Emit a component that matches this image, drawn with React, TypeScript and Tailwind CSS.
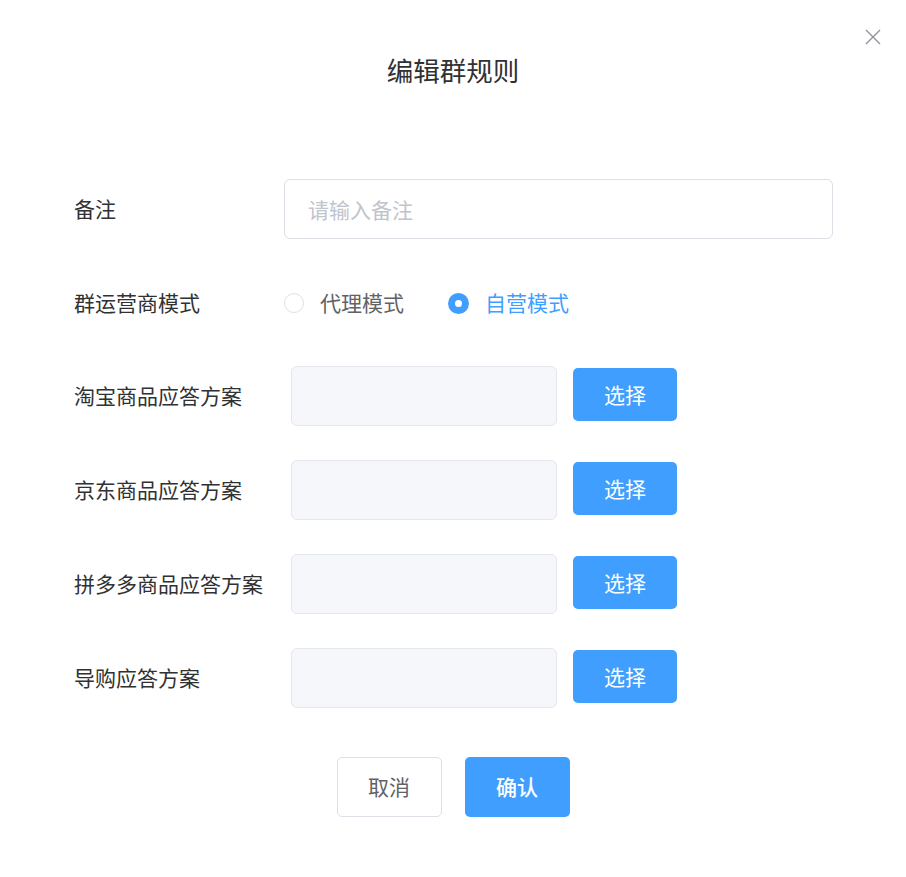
import React from "react"

const rules = ["淘宝商品应答方案", "京东商品应答方案", "拼多多商品应答方案", "导购应答方案"]

export default function App() {
  return (
    <div className="relative w-[906px] h-[877px] bg-white text-[#303133] font-['Noto_Sans_CJK_SC','Noto_Sans',sans-serif]">
      <button className="absolute left-[865px] top-[29px] w-[16px] h-[16px] text-[#909399]">
        <svg viewBox="0 0 16 16" width="16" height="16" fill="none" stroke="currentColor" strokeWidth="1.4">
          <path d="M1 1L15 15M15 1L1 15" />
        </svg>
      </button>

      <div className="pt-[52px] text-center text-[26.5px] leading-[36px]">编辑群规则</div>

      <div className="mt-[91px] pl-[74px] text-[21px]">
        <div className="flex items-center h-[60px]">
          <div className="w-[210px]">备注</div>
          <input
            className="w-[549px] h-[60px] border border-[#dcdfe6] rounded-[6px] px-[23px] outline-none placeholder:text-[#c0c4cc]"
            placeholder="请输入备注"
          />
        </div>

        <div className="flex items-center h-[60px] mt-[34px]">
          <div className="w-[210px]">群运营商模式</div>
          <div className="flex items-center">
            <span className="w-[20px] h-[20px] rounded-full border border-[#dcdfe6] bg-white" />
            <span className="ml-[16px] text-[#606266]">代理模式</span>
          </div>
          <div className="flex items-center ml-[44px]">
            <span className="w-[21px] h-[21px] rounded-full bg-[#409eff] flex items-center justify-center">
              <span className="w-[7px] h-[7px] rounded-full bg-white" />
            </span>
            <span className="ml-[16px] text-[#409eff]">自营模式</span>
          </div>
        </div>

        {rules.map((r, i) => (
          <div key={r} className={`flex items-center h-[60px] ${i === 0 ? "mt-[33px]" : "mt-[34px]"}`}>
            <div className="w-[217px]">{r}</div>
            <div className="w-[266px] h-[60px] bg-[#f5f7fa] border border-[#e4e7ed] rounded-[6px]" />
            <button className="ml-[16px] self-start mt-[2px] w-[104px] h-[53px] bg-[#409eff] rounded-[5px] text-white">
              选择
            </button>
          </div>
        ))}
      </div>

      <div className="mt-[49px] flex justify-center gap-[23px] text-[21px]">
        <button className="w-[105px] h-[60px] border border-[#dcdfe6] rounded-[5px] text-[#606266] bg-white">取消</button>
        <button className="w-[105px] h-[60px] rounded-[5px] bg-[#409eff] text-white font-medium">确认</button>
      </div>
    </div>
  )
}
